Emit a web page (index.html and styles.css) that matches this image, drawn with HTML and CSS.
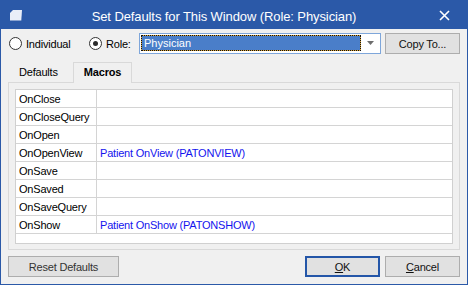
FILE: index.html
```html
<!DOCTYPE html>
<html lang="en">
<head>
    <meta charset="UTF-8">
    <title>Set Defaults for This Window</title>
    <link rel="stylesheet" href="styles.css">
</head>
<body>
    <div class="window">
        <div class="titlebar">
            <span class="app-icon">
                <svg width="13" height="11" viewBox="0 0 13 11">
                    <polygon points="1,3 4,0 13,0 12.3,10.5 1,10.5" fill="#e9eef8"/>
                </svg>
            </span>
            <span class="title">Set Defaults for This Window (Role: Physician)</span>
            <span class="close-btn">
                <svg width="11" height="11" viewBox="0 0 11 11">
                    <path d="M1 1 L10 10 M10 1 L1 10" stroke="#fff" stroke-width="1.6"/>
                </svg>
            </span>
        </div>

        <div class="content">
            <div class="scope-row">
                <label class="radio radio-individual"><span class="radio-mark"></span>Individual</label>
                <label class="radio radio-role checked"><span class="radio-mark"></span>Role:</label>
                <div class="combo">
                    <span class="selected">Physician</span>
                    <span class="combo-arrow">
                        <svg width="7" height="4" viewBox="0 0 7 4"><polygon points="0,0 7,0 3.5,4" fill="#6d6d6d"/></svg>
                    </span>
                </div>
                <button class="btn copy-btn">Copy To...</button>
            </div>

            <div class="tabs">
                <span class="tab">Defaults</span>
                <span class="tab active">Macros</span>
            </div>

            <div class="panel">
                <div class="grid">
                    <div class="grid-row"><span class="cell-name">OnClose</span><span class="cell-value"></span></div>
                    <div class="grid-row"><span class="cell-name">OnCloseQuery</span><span class="cell-value"></span></div>
                    <div class="grid-row"><span class="cell-name">OnOpen</span><span class="cell-value"></span></div>
                    <div class="grid-row"><span class="cell-name">OnOpenView</span><span class="cell-value">Patient OnView (PATONVIEW)</span></div>
                    <div class="grid-row"><span class="cell-name">OnSave</span><span class="cell-value"></span></div>
                    <div class="grid-row"><span class="cell-name">OnSaved</span><span class="cell-value"></span></div>
                    <div class="grid-row"><span class="cell-name">OnSaveQuery</span><span class="cell-value"></span></div>
                    <div class="grid-row"><span class="cell-name">OnShow</span><span class="cell-value">Patient OnShow (PATONSHOW)</span></div>
                </div>
            </div>

            <div class="footer">
                <button class="btn reset-btn">Reset Defaults</button>
                <button class="btn ok-btn"><u>O</u>K</button>
                <button class="btn cancel-btn"><u>C</u>ancel</button>
            </div>
        </div>
    </div>
</body>
</html>
```

FILE: styles.css
```css
body {
    margin: 0;
    background-color: #ffffff;
    font-family: 'Liberation Sans', Arial, sans-serif;
    font-size: 11px;
    color: #000;
}

.window {
    width: 468px;
    height: 285px;
    box-sizing: border-box;
    border: 1px solid #2b59a8;
    background-color: #f0f0f0;
    display: flex;
    flex-direction: column;
}

.titlebar {
    flex: none;
    height: 28px;
    background-color: #2b59a8;
    color: #fff;
    display: flex;
    align-items: center;
}

.app-icon {
    width: 26px;
    padding-left: 8px;
    box-sizing: border-box;
    display: flex;
    margin-top: 1px;
}

.title {
    flex: 1;
    text-align: center;
    font-size: 13px;
    letter-spacing: -0.1px;
    padding-top: 2px;
}

.close-btn {
    width: 46px;
    display: flex;
    justify-content: center;
    margin-top: 1px;
}

.content {
    flex: 1;
    display: flex;
    flex-direction: column;
    padding: 4px 7px 0;
}

/* role / individual row */
.scope-row {
    display: flex;
    align-items: center;
    height: 21px;
}

.radio {
    display: flex;
    align-items: center;
    gap: 4px;
    letter-spacing: -0.2px;
}

.radio-individual {
    margin-left: 1px;
    width: 80px;
}

.radio-role {
    width: 50px;
}

.radio-mark {
    width: 13px;
    height: 13px;
    box-sizing: border-box;
    border: 1px solid #333;
    border-radius: 50%;
    background-color: #fff;
    display: flex;
    align-items: center;
    justify-content: center;
}

.radio.checked .radio-mark::after {
    content: '';
    width: 5px;
    height: 5px;
    border-radius: 50%;
    background-color: #2a2a2a;
}

.combo {
    width: 242px;
    height: 21px;
    box-sizing: border-box;
    border: 1px solid #7ea6da;
    background-color: #fff;
    display: flex;
    padding: 1px 0 2px 1px;
}

.selected {
    flex: 1;
    border: 1px dotted #111;
    background: linear-gradient(#4a7ec9, #4a7ec9) padding-box, #d9a43a;
    color: #fff;
    padding-left: 2px;
    line-height: 15px;
}

.combo-arrow {
    width: 19px;
    display: flex;
    align-items: center;
    justify-content: center;
}

.btn {
    height: 21px;
    box-sizing: border-box;
    border: 1px solid #adadad;
    background-color: #e1e1e1;
    font-family: inherit;
    font-size: 11px;
    color: #111;
    padding: 0;
    letter-spacing: -0.2px;
}

.copy-btn {
    width: 75px;
    margin-left: 4px;
}

/* tabs */
.tabs {
    display: flex;
    height: 21px;
    margin-top: 8px;
    margin-bottom: -1px;
    position: relative;
    z-index: 1;
}

.tab {
    height: 21px;
    box-sizing: border-box;
    padding-top: 1px;
    line-height: 18px;
    letter-spacing: -0.2px;
}

.tab:first-child {
    width: 65px;
    padding-left: 11px;
}

.tab.active {
    width: 59px;
    padding-top: 0;
    border: 1px solid #d9d9d9;
    border-bottom: none;
    background-color: #f0f0f0;
    font-weight: bold;
    text-align: center;
}

.panel {
    height: 168px;
    box-sizing: border-box;
    border: 1px solid #d9d9d9;
    padding: 6px;
}

.grid {
    height: 155px;
    box-sizing: border-box;
    border: 1px solid #d0d0d0;
    background-color: #fff;
}

.grid-row {
    display: flex;
    height: 18px;
    box-sizing: border-box;
    border-bottom: 1px solid #d4d4d4;
    line-height: 18px;
    letter-spacing: -0.2px;
}

.cell-name {
    width: 81px;
    flex: none;
    box-sizing: border-box;
    border-right: 1px solid #d4d4d4;
    padding-left: 3px;
}

.cell-value {
    padding-left: 3px;
    color: #1414ee;
}

/* bottom buttons */
.footer {
    display: flex;
    margin-top: 6px;
}

.reset-btn {
    width: 111px;
    color: #333;
}

.ok-btn {
    width: 75px;
    margin-left: auto;
    border: 2px solid #2456a8;
}

.cancel-btn {
    width: 75px;
    margin-left: 5px;
}
```
